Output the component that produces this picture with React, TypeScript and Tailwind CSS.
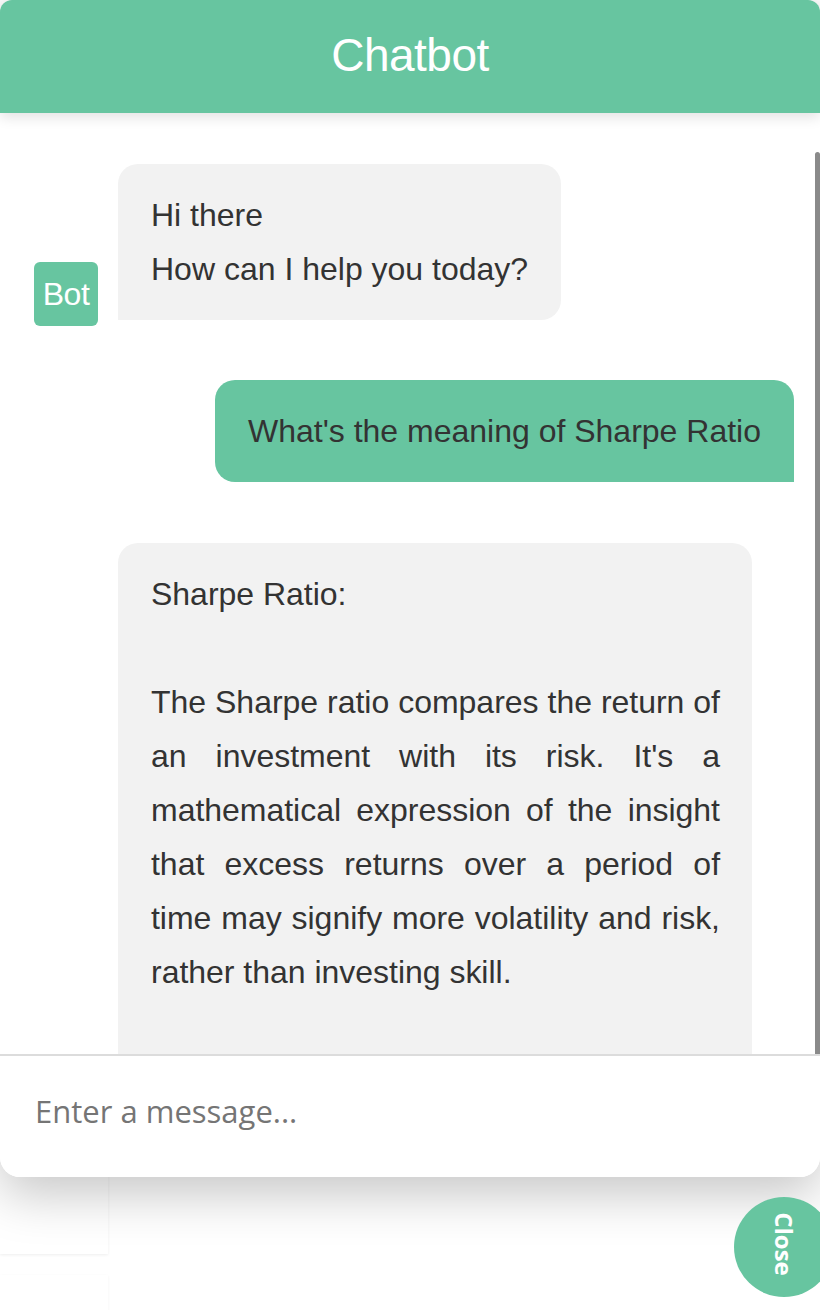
import React from "react";

const GREEN = "bg-[#67c5a0]";

export default function App() {
  const answer =
    "Sharpe Ratio:\n\nThe Sharpe ratio compares the return of an investment with its risk. It's a mathematical expression of the insight that excess returns over a period of time may signify more volatility and risk, rather than investing skill.";
  return (
    <div className="relative w-[820px] h-[1310px] overflow-hidden bg-white font-['Liberation_Sans',Arial,sans-serif]">
      {/* page content behind the widget */}
      <div className="flex flex-col gap-[21px] w-[108px] pt-[1100px]">
        <div className="h-[154px] bg-white shadow-[0_1px_3px_rgba(0,0,0,0.07)]" />
        <div className="h-[120px] bg-white shadow-[0_1px_3px_rgba(0,0,0,0.05)]" />
      </div>

      {/* chat widget */}
      <div className="absolute left-0 top-0 z-10 w-[820px] h-[1177px] flex flex-col bg-white rounded-t-[12px] rounded-b-[20px] shadow-[0_18px_50px_rgba(0,0,0,0.22)]">
        <div className={`relative z-10 h-[113px] shrink-0 ${GREEN} rounded-t-[12px] flex items-center justify-center shadow-[0_4px_14px_rgba(0,0,0,0.12)]`}>
          <span className="text-white text-[46px] leading-none tracking-[-0.5px] pb-[4px]">Chatbot</span>
        </div>

        <div className="relative flex-1 overflow-hidden">
          <div className="flex flex-col pt-[51px] text-[32px] leading-[54px] text-[#333]">
            {/* bot greeting */}
            <div className="flex items-end pl-[34px] gap-[20px]">
              <div className={`w-[64px] h-[64px] shrink-0 ${GREEN} rounded-[6px] flex items-center justify-center text-white text-[32px] tracking-[-0.5px] mb-[-6px]`}>
                Bot
              </div>
              <div className="bg-[#f2f2f2] rounded-[20px] rounded-bl-none px-[33px] py-[24px]">
                <div>Hi there</div>
                <div>How can I help you today?</div>
              </div>
            </div>

            {/* user message */}
            <div className="flex justify-end pr-[26px] mt-[60px]">
              <div className={`${GREEN} rounded-[20px] rounded-br-none px-[33px] py-[24px]`}>
                What's the meaning of Sharpe Ratio
              </div>
            </div>

            {/* bot answer */}
            <div className="flex pl-[118px] mt-[61px]">
              <div className="w-[634px] bg-[#f2f2f2] rounded-[20px] pl-[33px] pr-[32px] pt-[24px] pb-[120px] whitespace-pre-line text-justify tracking-[-0.02px]">
                {answer}
              </div>
            </div>
          </div>
          {/* scrollbar thumb */}
          <div className="absolute right-0 top-[39px] bottom-0 w-[5px] bg-[#8a8a8a] rounded-t-[4px]" />
        </div>

        <div className="h-[123px] shrink-0 border-t-2 border-[#dcdcdc] flex items-center px-[35px] pb-[10px] rounded-b-[20px] bg-white">
          <input
            className="w-full outline-none bg-transparent text-[31px] font-['Open_Sans',sans-serif] text-[#333] placeholder:text-[#757575]"
            placeholder="Enter a message..."
          />
        </div>
      </div>

      {/* close button */}
      <div className={`absolute left-[734px] top-[1197px] z-20 w-[100px] h-[100px] rounded-full ${GREEN} flex items-center justify-center`}>
        <span className="rotate-90 text-white font-bold text-[24px] font-['Open_Sans',sans-serif] leading-none pr-[6px]">
          Close
        </span>
      </div>
    </div>
  );
}
